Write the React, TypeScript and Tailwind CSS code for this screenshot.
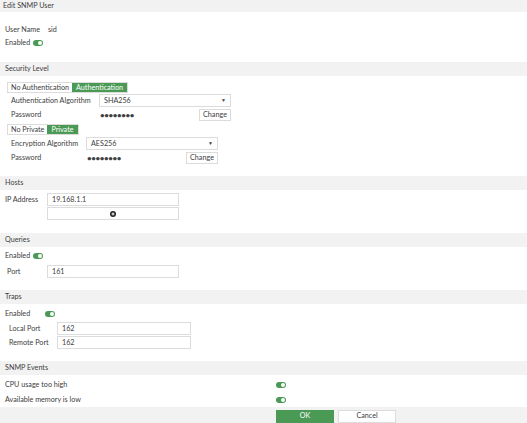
import React from "react";

function Toggle() {
  return (
    <span className="inline-flex h-[6px] w-[10px] items-center justify-end rounded-full bg-[#4a9a55] pr-[1px]">
      <span className="h-[4px] w-[4px] rounded-full bg-white" />
    </span>
  );
}

function Bar({ title, top = false }: { title: string; top?: boolean }) {
  return (
    <div
      className={`flex items-center bg-[#f2f2f2] ${top ? "h-[12px] pl-[3px]" : "h-[14px] pl-[5px]"}`}
    >
      {title}
    </div>
  );
}

function Input({ value, w = "w-[132px]" }: { value: string; w?: string }) {
  return (
    <div className={`flex h-[13px] ${w} items-center border border-[#dcdcdc] bg-white pl-[4px]`}>
      {value}
    </div>
  );
}

function Select({ value }: { value: string }) {
  return (
    <div className="flex h-[13px] w-[132px] items-center justify-between border border-[#dcdcdc] bg-white pl-[4px] pr-[4px]">
      <span>{value}</span>
      <span className="text-[5px] leading-none">▼</span>
    </div>
  );
}

function Tabs({ off, on }: { off: string; on: string }) {
  return (
    <div className="ml-[7px] flex h-[11px] w-fit border border-[#dcdcdc]">
      <span className="flex items-center px-[3px]">{off}</span>
      <span className="flex items-center bg-[#4a9a55] px-[4px] text-white">{on}</span>
    </div>
  );
}

function Password({ labelW }: { labelW: string }) {
  return (
    <div className="flex h-[12px] items-center pl-[11px]">
      <span className={labelW}>Password</span>
      <span className="w-[100px] pl-[1px] text-[8px] font-bold tracking-[-0.4px]">••••••••</span>
      <span className="flex h-[12px] w-[32px] items-center justify-center border border-[#dcdcdc] bg-white">
        Change
      </span>
    </div>
  );
}

export default function App() {
  return (
    <div
      className="h-[423px] w-[527px] overflow-hidden bg-white text-[7.2px] leading-none text-[#404040]"
      style={{ fontFamily: "Lato, 'Noto Sans', sans-serif" }}
    >
      <Bar title="Edit SNMP User" top />

      <div className="pl-[5px] pt-[12px] pb-[13px]">
        <div className="flex h-[12px] items-center">
          <span className="w-[43px]">User Name</span>
          <span>sid</span>
        </div>
        <div className="mt-[1px] flex h-[12px] items-center gap-[3px]">
          <span>Enabled</span>
          <Toggle />
        </div>
      </div>

      <Bar title="Security Level" />
      <div className="pt-[6px] pb-[12px]">
        <Tabs off="No Authentication" on="Authentication" />
        <div className="mt-[1px] flex h-[13px] items-center pl-[11px]">
          <span className="w-[88px]">Authentication Algorithm</span>
          <Select value="SHA256" />
        </div>
        <div className="mt-[2px]">
          <Password labelW="w-[88px]" />
        </div>
        <div className="mt-[3px]">
          <Tabs off="No Private" on="Private" />
        </div>
        <div className="mt-[2px] flex h-[13px] items-center pl-[11px]">
          <span className="w-[75px]">Encryption Algorithm</span>
          <Select value="AES256" />
        </div>
        <div className="mt-[2px]">
          <Password labelW="w-[75px]" />
        </div>
      </div>

      <Bar title="Hosts" />
      <div className="pl-[5px] pt-[3px] pb-[13px]">
        <div className="flex items-center">
          <span className="w-[42px]">IP Address</span>
          <Input value="19.168.1.1" />
        </div>
        <div className="ml-[42px] mt-[1px] flex h-[13px] w-[132px] items-center justify-center border border-[#dcdcdc]">
          <svg width="6" height="6" viewBox="0 0 12 12">
            <circle cx="6" cy="6" r="6" fill="#222" />
            <path d="M6 3v6M3 6h6" stroke="#fff" strokeWidth="2" />
          </svg>
        </div>
      </div>

      <Bar title="Queries" />
      <div className="pl-[5px] pt-[3px] pb-[12px]">
        <div className="flex h-[12px] items-center gap-[3px]">
          <span>Enabled</span>
          <Toggle />
        </div>
        <div className="mt-[3px] flex items-center pl-[2px]">
          <span className="w-[40px]">Port</span>
          <Input value="161" />
        </div>
      </div>

      <Bar title="Traps" />
      <div className="pl-[5px] pt-[4px] pb-[12px]">
        <div className="flex h-[12px] items-center">
          <span className="w-[40px]">Enabled</span>
          <Toggle />
        </div>
        <div className="mt-[2px] flex items-center pl-[4px]">
          <span className="w-[48px]">Local Port</span>
          <Input value="162" w="w-[134px]" />
        </div>
        <div className="mt-[1px] flex items-center pl-[4px]">
          <span className="w-[48px]">Remote Port</span>
          <Input value="162" w="w-[134px]" />
        </div>
      </div>

      <Bar title="SNMP Events" />
      <div className="pl-[5px] pt-[4px] pb-[1px]">
        <div className="flex h-[12px] items-center">
          <span className="w-[271px]">CPU usage too high</span>
          <Toggle />
        </div>
        <div className="mt-[3px] flex h-[12px] items-center">
          <span className="w-[271px]">Available memory is low</span>
          <Toggle />
        </div>
      </div>

      <div className="flex h-[18px] items-center gap-[4px] bg-[#f2f2f2] pl-[276px]">
        <span className="flex h-[13px] w-[58px] items-center justify-center bg-[#4a9a55] text-white">
          OK
        </span>
        <span className="flex h-[13px] w-[58px] items-center justify-center border border-[#dcdcdc] bg-white">
          Cancel
        </span>
      </div>
    </div>
  );
}
